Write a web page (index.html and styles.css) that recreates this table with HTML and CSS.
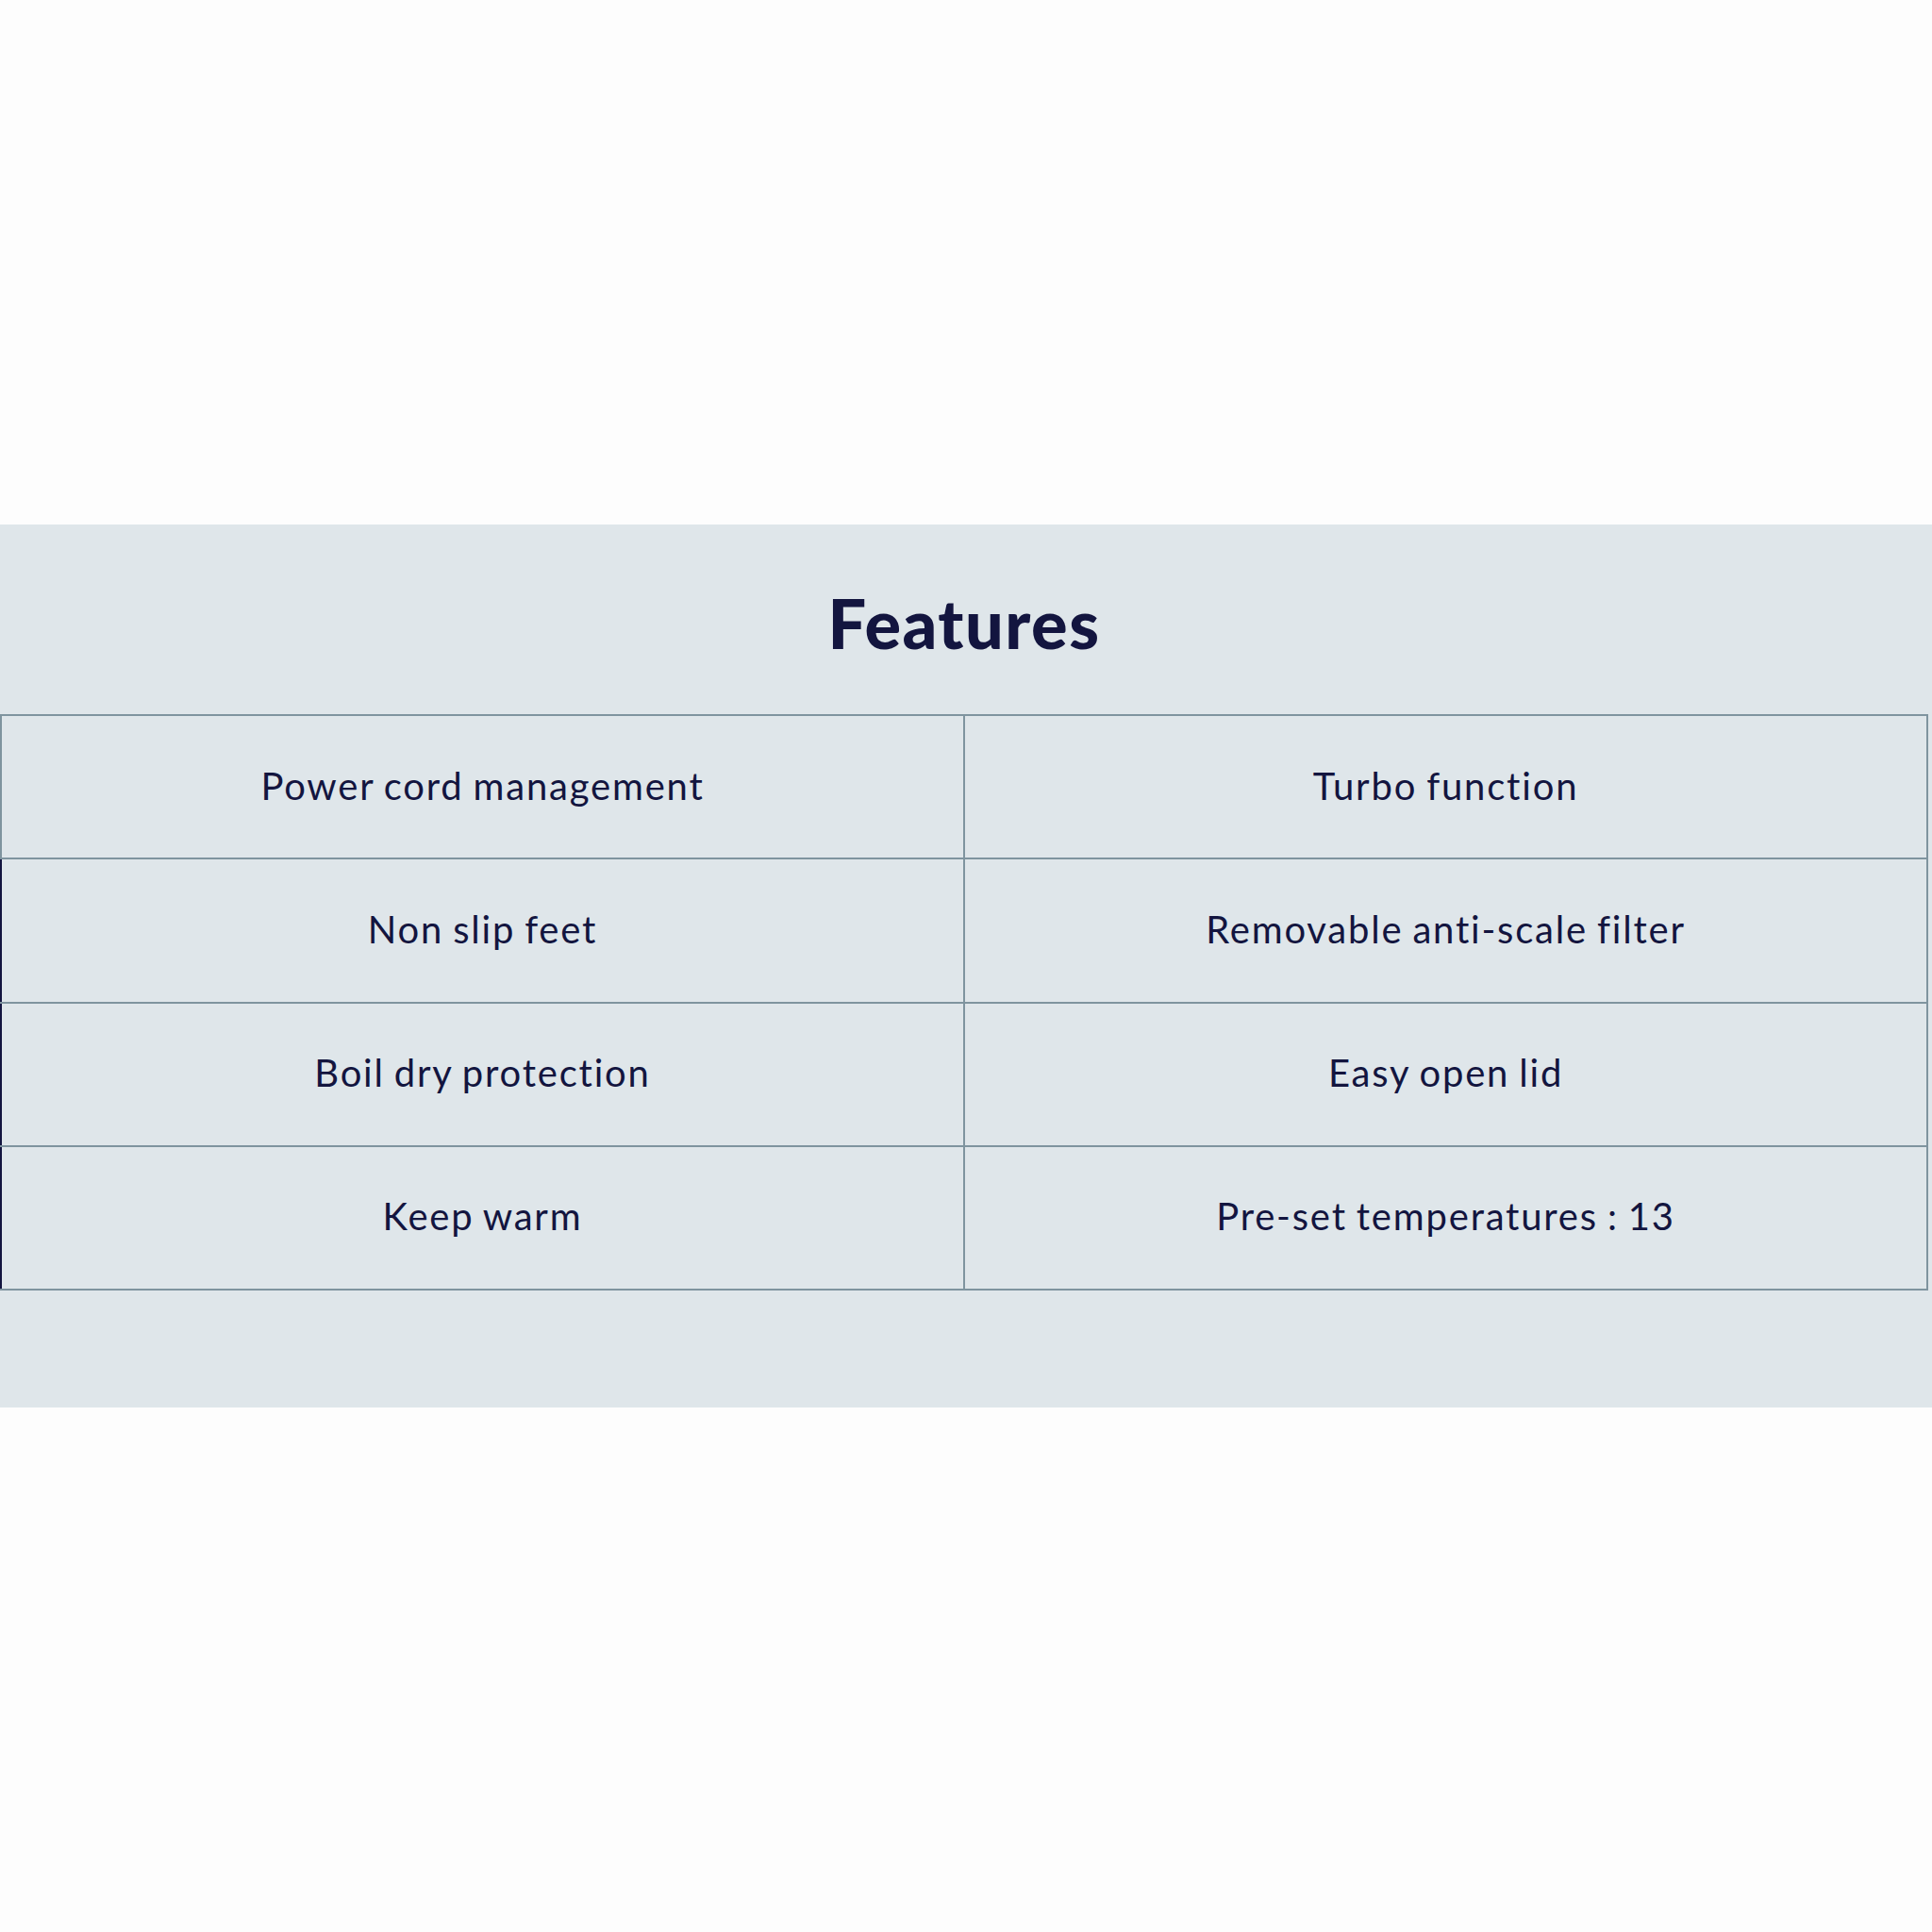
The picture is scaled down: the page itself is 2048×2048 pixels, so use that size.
FILE: index.html
```html
<!DOCTYPE html>
<html lang="en">
<head>
<meta charset="utf-8">
<title>Features</title>
<link rel="stylesheet" href="styles.css">
</head>
<body>
<main class="page">
  <section class="features">
    <h2 class="features-title">Features</h2>
    <table class="features-table">
      <tbody>
        <tr class="row first">
          <td class="cell">Power cord management</td>
          <td class="cell">Turbo function</td>
        </tr>
        <tr class="row">
          <td class="cell">Non slip feet</td>
          <td class="cell">Removable anti-scale filter</td>
        </tr>
        <tr class="row">
          <td class="cell">Boil dry protection</td>
          <td class="cell">Easy open lid</td>
        </tr>
        <tr class="row">
          <td class="cell">Keep warm</td>
          <td class="cell">Pre-set temperatures : 13</td>
        </tr>
      </tbody>
    </table>
  </section>
</main>
</body>
</html>
```

FILE: styles.css
```css
html, body {
  margin: 0;
  padding: 0;
  background: #fdfdfd;
}

.page {
  min-height: 100vh;
  display: flex;
  flex-direction: column;
  justify-content: center;
}

.features {
  background: #dfe6ea;
  padding: 0 4px 124px 0;
  font-family: Lato, "Open Sans", sans-serif;
  color: #13153f;
}

.features-title {
  margin: 0;
  height: 201px;
  display: flex;
  align-items: center;
  justify-content: center;
  font-size: 72px;
  font-weight: 900;
  letter-spacing: 1.5px;
  line-height: 1;
  padding-top: 8px;
  box-sizing: border-box;
}

.features-table {
  width: 100%;
  border-collapse: collapse;
  table-layout: fixed;
}

.cell {
  border: 2px solid #7f949f;
  height: 147.3px;
  padding: 0 0 3px 0;
  text-align: center;
  vertical-align: middle;
  font-size: 40px;
  font-weight: 400;
  letter-spacing: 1.8px;
  word-spacing: -2px;
}

.row:not(.first) .cell:first-child {
  border-left-color: #13153f;
}
```
